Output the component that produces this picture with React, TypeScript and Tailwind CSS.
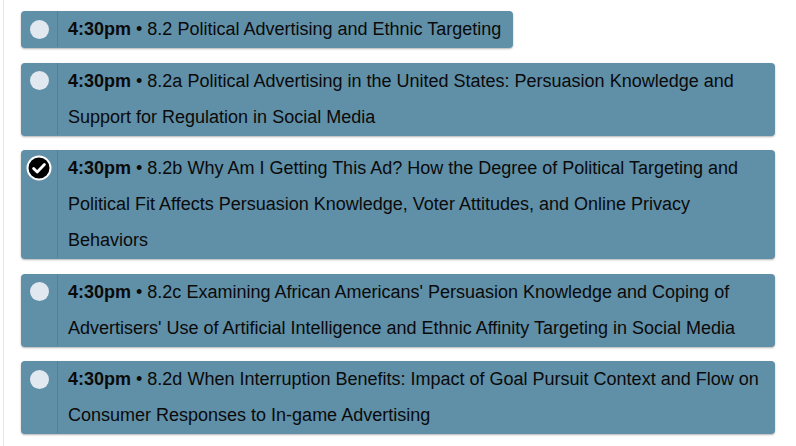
import React from "react"

const sessions = [
  { id: "8.2", title: "Political Advertising and Ethnic Targeting", done: false },
  {
    id: "8.2a",
    title: "Political Advertising in the United States: Persuasion Knowledge and Support for Regulation in Social Media",
    done: false,
  },
  {
    id: "8.2b",
    title:
      "Why Am I Getting This Ad? How the Degree of Political Targeting and Political Fit Affects Persuasion Knowledge, Voter Attitudes, and Online Privacy Behaviors",
    done: true,
  },
  {
    id: "8.2c",
    title:
      "Examining African Americans' Persuasion Knowledge and Coping of Advertisers' Use of Artificial Intelligence and Ethnic Affinity Targeting in Social Media",
    done: false,
  },
  {
    id: "8.2d",
    title:
      "When Interruption Benefits: Impact of Goal Pursuit Context and Flow on Consumer Responses to In-game Advertising",
    done: false,
  },
]

function CheckMark() {
  return (
    <svg width="26" height="26" viewBox="0 0 26 26">
      <circle cx="13" cy="13" r="11.5" fill="#000" stroke="#fff" strokeWidth="2" />
      <path d="M7.6 13.4l3.6 3.5 7.2-7.3" fill="none" stroke="#fff" strokeWidth="2.8" strokeLinecap="round" strokeLinejoin="round" />
    </svg>
  )
}

export default function App() {
  return (
    <div className="w-[796px] h-[446px] bg-white overflow-hidden" style={{ fontFamily: '"Liberation Sans", Arial, sans-serif' }}>
      <div className="ml-[3px] h-full border-l border-[#e8e8e8] pl-[17px] pr-[21px] pt-[11px]">
        {sessions.map((s) => (
          <div
            key={s.id}
            className="flex w-fit max-w-full mb-[14.5px] pb-px rounded-[4px] bg-[#608fa8] shadow-[0_1px_2px_rgba(0,0,0,0.3)]"
          >
            <div className="w-[37px] shrink-0 flex justify-center border-r border-[#52809a]">
              <div className="h-[36px] flex items-center">
                {s.done ? (
                  <CheckMark />
                ) : (
                  <span className="block w-[19px] h-[19px] rounded-full bg-[#e2e8ef]" />
                )}
              </div>
            </div>
            <div className="pl-[10px] pr-[12px] text-[18px] leading-[36px] text-[#0a0a0a]">
              <span className="font-bold">4:30pm</span> • {s.id} {s.title}
            </div>
          </div>
        ))}
      </div>
    </div>
  )
}
